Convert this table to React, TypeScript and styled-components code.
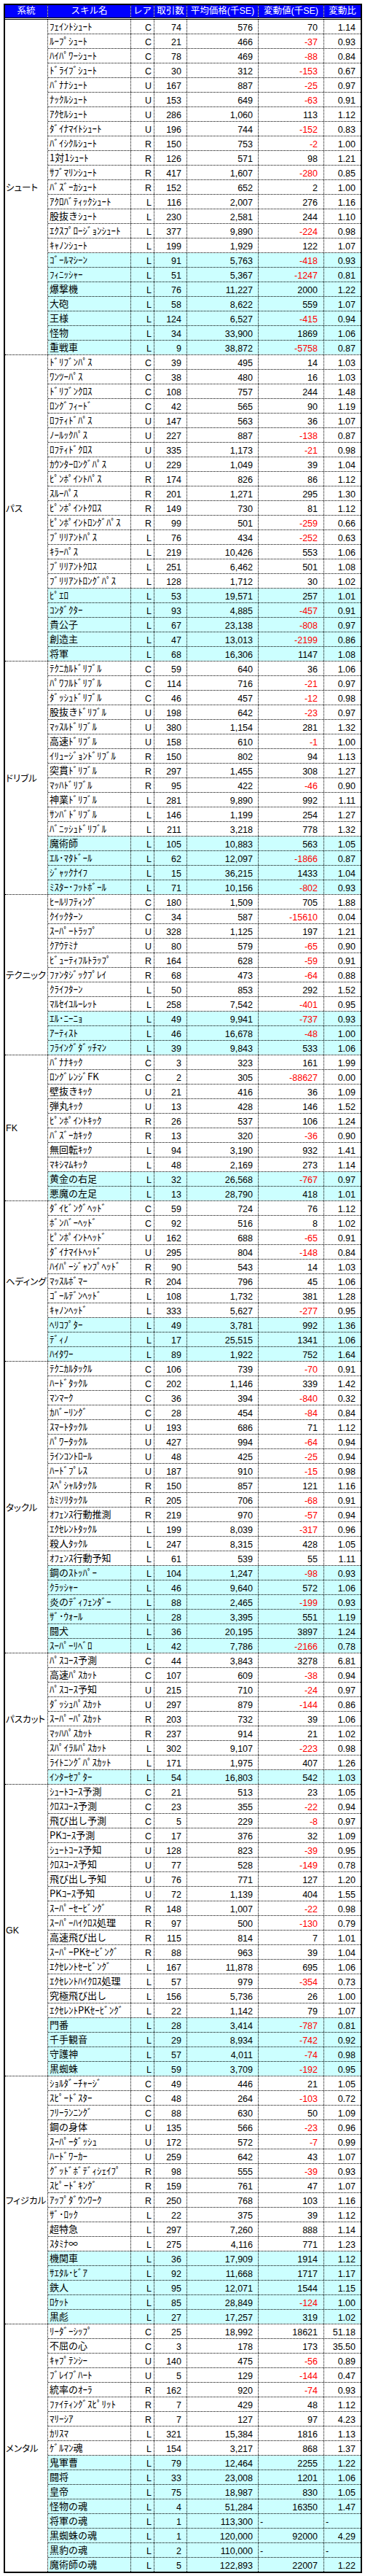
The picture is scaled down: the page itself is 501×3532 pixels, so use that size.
import React from "react";
import styled, { createGlobalStyle } from "styled-components";

const GlobalStyle = createGlobalStyle`
  *, *::before, *::after { box-sizing: border-box; }
  html, body { margin: 0; padding: 0; background: #fff; }
  body { font-family: "Liberation Sans", "Noto Sans CJK JP", sans-serif; color: #000; }
`;

const DATA_COLS = "114px 32px 45px 98px 90px 50px";

type Section = { label: string; cyan: number; rows: string };

const SECTIONS: Section[] = [
  {
    label: "シュート",
    cyan: 7,
    rows: `
フェイントシュート C 74 576 70 1.14
ループシュート C 21 466 -37 0.93
ハイパワーシュート C 78 469 -88 0.84
ドライブシュート C 30 312 -153 0.67
バナナシュート U 167 887 -25 0.97
ナックルシュート U 153 649 -63 0.91
アクセルシュート U 286 1,060 113 1.12
ダイナマイトシュート U 196 744 -152 0.83
バイシクルシュート R 150 753 -2 1.00
1対1シュート R 126 571 98 1.21
サブマリンシュート R 417 1,607 -280 0.85
バズーカシュート R 152 652 2 1.00
アクロバティックシュート L 116 2,007 276 1.16
股抜きシュート L 230 2,581 244 1.10
エクスプロージョンシュート L 377 9,890 -224 0.98
キャノンシュート L 199 1,929 122 1.07
ゴールマシーン L 91 5,763 -418 0.93
フィニッシャー L 51 5,367 -1247 0.81
爆撃機 L 76 11,227 2000 1.22
大砲 L 58 8,622 559 1.07
王様 L 124 6,527 -415 0.94
怪物 L 34 33,900 1869 1.06
重戦車 L 9 38,872 -5758 0.87`,
  },
  {
    label: "パス",
    cyan: 5,
    rows: `
ドリブンパス C 39 495 14 1.03
ワンツーパス C 38 480 16 1.03
ドリブンクロス C 108 757 244 1.48
ロングフィード C 42 565 90 1.19
ロフティドパス U 147 563 36 1.07
ノールックパス U 227 887 -138 0.87
ロフティドクロス U 335 1,173 -21 0.98
カウンターロングパス U 229 1,049 39 1.04
ピンポイントパス R 174 826 86 1.12
スルーパス R 201 1,271 295 1.30
ピンポイントクロス R 149 730 81 1.12
ピンポイントロングパス R 99 501 -259 0.66
ブリリアントパス L 76 434 -252 0.63
キラーパス L 219 10,426 553 1.06
ブリリアントクロス L 251 6,462 501 1.08
ブリリアントロングパス L 128 1,712 30 1.02
ピエロ L 53 19,571 257 1.01
コンダクター L 93 4,885 -457 0.91
貴公子 L 67 23,138 -808 0.97
創造主 L 47 13,013 -2199 0.86
将軍 L 68 16,306 1147 1.08`,
  },
  {
    label: "ドリブル",
    cyan: 4,
    rows: `
テクニカルドリブル C 59 640 36 1.06
パワフルドリブル C 114 716 -21 0.97
ダッシュドリブル C 46 457 -12 0.98
股抜きドリブル U 198 642 -23 0.97
マッスルドリブル U 380 1,154 281 1.32
高速ドリブル U 158 610 -1 1.00
イリュージョンドリブル R 150 802 94 1.13
突貫ドリブル R 297 1,455 308 1.27
マッハドリブル R 95 422 -46 0.90
神業ドリブル L 281 9,890 992 1.11
サンバドリブル L 146 1,199 254 1.27
バニッシュドリブル L 211 3,218 778 1.32
魔術師 L 105 10,883 563 1.05
エル・マタドール L 62 12,097 -1866 0.87
ジャックナイフ L 15 36,215 1433 1.04
ミスター・フットボール L 71 10,156 -802 0.93`,
  },
  {
    label: "テクニック",
    cyan: 3,
    rows: `
ヒールリフティング C 180 1,509 705 1.88
クイックターン C 34 587 -15610 0.04
スーパートラップ U 328 1,125 197 1.21
クアウテミナ U 80 579 -65 0.90
ビューティフルトラップ R 164 628 -59 0.91
ファンタジックプレイ R 68 473 -64 0.88
クライフターン L 50 853 292 1.52
マルセイユルーレット L 258 7,542 -401 0.95
エル・ニーニョ L 49 9,941 -737 0.93
アーティスト L 46 16,678 -48 1.00
フライングダッチマン L 39 9,843 533 1.06`,
  },
  {
    label: "FK",
    cyan: 2,
    rows: `
バナナキック C 3 323 161 1.99
ロングレンジFK C 2 305 -88627 0.00
壁抜きキック U 21 416 36 1.09
弾丸キック U 13 428 146 1.52
ピンポイントキック R 26 537 106 1.24
バズーカキック R 13 320 -36 0.90
無回転キック L 94 3,190 932 1.41
マキシマムキック L 48 2,169 273 1.14
黄金の右足 L 32 26,568 -767 0.97
悪魔の左足 L 13 28,790 418 1.01`,
  },
  {
    label: "ヘディング",
    cyan: 3,
    rows: `
ダイビングヘッド C 59 724 76 1.12
ボンバーヘッド C 92 516 8 1.02
ピンポイントヘッド U 162 688 -65 0.91
ダイナマイトヘッド U 295 804 -148 0.84
ハイパージャンプヘッド R 90 543 14 1.03
マッスルボマー R 204 796 45 1.06
ゴールデンヘッド L 108 1,732 381 1.28
キャノンヘッド L 333 5,627 -277 0.95
ヘリコプター L 49 3,781 992 1.36
ディノ L 17 25,515 1341 1.06
ハイタワー L 89 1,922 752 1.64`,
  },
  {
    label: "タックル",
    cyan: 6,
    rows: `
テクニカルタックル C 106 739 -70 0.91
ハードタックル C 202 1,146 339 1.42
マンマーク C 36 394 -840 0.32
カバーリング C 28 454 -84 0.84
スマートタックル U 193 686 71 1.12
パワータックル U 427 994 -64 0.94
ラインコントロール U 48 425 -25 0.94
ハードプレス U 187 910 -15 0.98
スペシャルタックル R 150 857 121 1.16
カミソリタックル R 205 706 -68 0.91
オフェンス行動推測 R 219 970 -57 0.94
エクセレントタックル L 199 8,039 -317 0.96
殺人タックル L 247 8,315 428 1.05
オフェンス行動予知 L 61 539 55 1.11
鋼のストッパー L 104 1,247 -98 0.93
クラッシャー L 46 9,640 572 1.06
炎のディフェンダー L 88 2,465 -199 0.93
ザ・ウォール L 28 3,395 551 1.19
闘犬 L 36 20,195 3897 1.24
スーパーリベロ L 42 7,786 -2166 0.78`,
  },
  {
    label: "パスカット",
    cyan: 1,
    rows: `
パスコース予測 C 44 3,843 3278 6.81
高速パスカット C 107 609 -38 0.94
パスコース予知 U 215 710 -24 0.97
ダッシュパスカット U 297 879 -144 0.86
スーパーパスカット R 203 732 39 1.06
マッハパスカット R 237 914 21 1.02
スパイラルパスカット L 302 9,107 -223 0.98
ライトニングパスカット L 171 1,975 407 1.26
インターセプター L 54 16,803 542 1.03`,
  },
  {
    label: "GK",
    cyan: 4,
    rows: `
シュートコース予測 C 21 513 23 1.05
クロスコース予測 C 23 355 -22 0.94
飛び出し予測 C 5 229 -8 0.97
PKコース予測 C 17 376 32 1.09
シュートコース予知 U 128 823 -39 0.95
クロスコース予知 U 77 528 -149 0.78
飛び出し予知 U 76 771 127 1.20
PKコース予知 U 72 1,139 404 1.55
スーパーセービング R 148 1,007 -22 0.98
スーパーハイクロス処理 R 97 500 -130 0.79
高速飛び出し R 115 814 7 1.01
スーパーPKセービング R 88 963 39 1.04
エクセレントセービング L 167 11,878 695 1.06
エクセレントハイクロス処理 L 57 979 -354 0.73
究極飛び出し L 156 5,736 26 1.00
エクセレントPKセービング L 22 1,142 79 1.07
門番 L 28 3,414 -787 0.81
千手観音 L 29 8,934 -742 0.92
守護神 L 57 4,011 -74 0.98
黒蜘蛛 L 59 3,709 -192 0.95`,
  },
  {
    label: "フィジカル",
    cyan: 5,
    rows: `
ショルダーチャージ C 49 446 21 1.05
スピードスター C 48 264 -103 0.72
フリーランニング C 88 630 50 1.09
鋼の身体 U 135 566 -23 0.96
スーパーダッシュ U 172 572 -7 0.99
ハードワーカー U 259 642 43 1.07
グッドボディシェイプ R 98 555 -39 0.93
スピードキング R 159 761 47 1.07
アップダウンワーク R 250 768 103 1.16
ザ・ロック L 22 375 39 1.12
超特急 L 297 7,260 888 1.14
スタミナ∞ L 275 4,116 771 1.23
機関車 L 36 17,909 1914 1.12
サエタル・ビア L 92 11,668 1717 1.17
鉄人 L 95 12,071 1544 1.15
ロケット L 85 28,849 -124 1.00
黒彪 L 27 17,257 319 1.02`,
  },
  {
    label: "メンタル",
    cyan: 8,
    rows: `
リーダーシップ C 25 18,992 18621 51.18
不屈の心 C 3 178 173 35.50
キャプテンシー U 140 475 -56 0.89
ブレイブハート U 5 129 -144 0.47
統率のオーラ R 162 920 -74 0.93
ファイティングスピリット R 7 429 48 1.12
マリーシア R 7 127 97 4.23
カリスマ L 321 15,384 1816 1.13
ゲルマン魂 L 154 3,217 868 1.37
鬼軍曹 L 79 12,464 2255 1.22
闘将 L 33 23,008 1201 1.06
皇帝 L 75 18,987 830 1.05
怪物の魂 L 4 51,284 16350 1.47
将軍の魂 L 1 113,300 - -
黒蜘蛛の魂 L 1 120,000 92000 4.29
黒豹の魂 L 2 110,000 - -
魔術師の魂 L 5 122,893 22007 1.22`,
  },
];

const FULL = "アイウエオカキクケコサシスセソタチツテトナニヌネノハヒフヘホマミムメモヤユヨラリルレロワヲンァィゥェォッャュョー・";
const HALF = "ｱｲｳｴｵｶｷｸｹｺｻｼｽｾｿﾀﾁﾂﾃﾄﾅﾆﾇﾈﾉﾊﾋﾌﾍﾎﾏﾐﾑﾒﾓﾔﾕﾖﾗﾘﾙﾚﾛﾜｦﾝｧｨｩｪｫｯｬｭｮｰ･";

function toHalfKana(s: string): string {
  let out = "";
  for (const ch of s) {
    const code = ch.charCodeAt(0);
    if (code >= 0x30a0 && code <= 0x30ff) {
      for (const c of ch.normalize("NFD")) {
        const i = FULL.indexOf(c);
        if (i >= 0) out += HALF[i];
        else if (c === "\u3099") out += "ﾞ";
        else if (c === "\u309a") out += "ﾟ";
        else out += c;
      }
    } else {
      out += ch;
    }
  }
  return out;
}

type Row = { name: string; rare: string; count: string; avg: string; change: string; ratio: string };

function parseRows(text: string): Row[] {
  return text
    .trim()
    .split("\n")
    .map((line) => {
      const [name, rare, count, avg, change, ratio] = line.trim().split(/\s+/);
      return { name: toHalfKana(name), rare, count, avg, change, ratio };
    });
}

const Sheet = styled.div`
  margin: 5px 0 0 5px;
  width: 492px;
  border: 2px solid #000;
  background: #fff;
`;

const HeaderRow = styled.div`
  display: grid;
  grid-template-columns: 59px ${DATA_COLS};
  height: 20px;
  border-bottom: 3px double #000;
  background: #fff;
`;

const HeaderCell = styled.div`
  background: linear-gradient(to left, #fff 1px, #0000ff 1px) border-box;
  border-right: 1px dotted #000;
  color: #fff;
  font-size: 12.5px;
  line-height: 17px;
  text-align: center;
  white-space: nowrap;
  overflow: hidden;
  &:last-child {
    background: #0000ff;
    border-right: none;
  }
`;

const SectionBlock = styled.div`
  display: grid;
  grid-template-columns: 59px 1fr;
  border-bottom: 1px dotted #000;
  &:last-child {
    border-bottom: none;
  }
`;

const SectionLabel = styled.div<{ $latin: boolean }>`
  display: flex;
  align-items: center;
  padding-left: 1px;
  border-right: 1px dotted #000;
  font-family: ${(p) => (p.$latin ? `"Liberation Sans", sans-serif` : `"Noto Sans CJK JP", sans-serif`)};
  font-size: ${(p) => (p.$latin ? "12.5px" : "12.5px")};
  font-feature-settings: "palt" 1;
  white-space: nowrap;
  overflow: hidden;
`;

const RowList = styled.div`
  display: flex;
  flex-direction: column;
`;

const DataRow = styled.div<{ $cyan: boolean }>`
  display: grid;
  grid-template-columns: ${DATA_COLS};
  height: 20px;
  border-bottom: 1px dotted #000;
  background: ${(p) => (p.$cyan ? "#ccffff" : "#fff")};
  &:last-child {
    height: 19px;
    border-bottom: none;
  }
`;

const Cell = styled.div`
  border-right: 1px dotted #000;
  font-size: 12.5px;
  line-height: 16px;
  padding-top: 3px;
  white-space: nowrap;
  overflow: hidden;
  &:last-child {
    border-right: none;
  }
`;

const NameCell = styled(Cell)`
  font-family: "Noto Sans CJK JP", sans-serif;
  font-size: 13px;
  padding-top: 1px;
  padding-left: 2px;
  text-align: left;
`;

const RareCell = styled(Cell)`
  text-align: right;
  padding-right: 3px;
`;

const NumCell = styled(Cell)<{ $pad: number; $red?: boolean; $dash?: boolean }>`
  text-align: ${(p) => (p.$dash ? "left" : "right")};
  padding-right: ${(p) => p.$pad}px;
  padding-left: ${(p) => (p.$dash ? 2 : 0)}px;
  color: ${(p) => (p.$red ? "#ff0000" : "#000")};
`;

const HEADERS = ["系統", "スキル名", "レア", "取引数", "平均価格(千SE)", "変動値(千SE)", "変動比"];

export default function App() {
  return (
    <>
      <GlobalStyle />
      <Sheet>
        <HeaderRow>
          {HEADERS.map((h) => (
            <HeaderCell key={h}>{h}</HeaderCell>
          ))}
        </HeaderRow>
        {SECTIONS.map((sec) => {
          const rows = parseRows(sec.rows);
          return (
            <SectionBlock key={sec.label}>
              <SectionLabel $latin={/^[A-Z]+$/.test(sec.label)}>{sec.label}</SectionLabel>
              <RowList>
                {rows.map((r, i) => {
                  const dash = r.change === "-";
                  return (
                    <DataRow key={r.name + i} $cyan={i >= rows.length - sec.cyan}>
                      <NameCell>{r.name}</NameCell>
                      <RareCell>{r.rare}</RareCell>
                      <NumCell $pad={7}>{r.count}</NumCell>
                      <NumCell $pad={7}>{r.avg}</NumCell>
                      <NumCell $pad={dash ? 0 : 8} $dash={dash} $red={r.change.startsWith("-") && !dash}>
                        {r.change}
                      </NumCell>
                      <NumCell $pad={r.ratio === "-" ? 0 : 7} $dash={r.ratio === "-"}>
                        {r.ratio}
                      </NumCell>
                    </DataRow>
                  );
                })}
              </RowList>
            </SectionBlock>
          );
        })}
      </Sheet>
    </>
  );
}
